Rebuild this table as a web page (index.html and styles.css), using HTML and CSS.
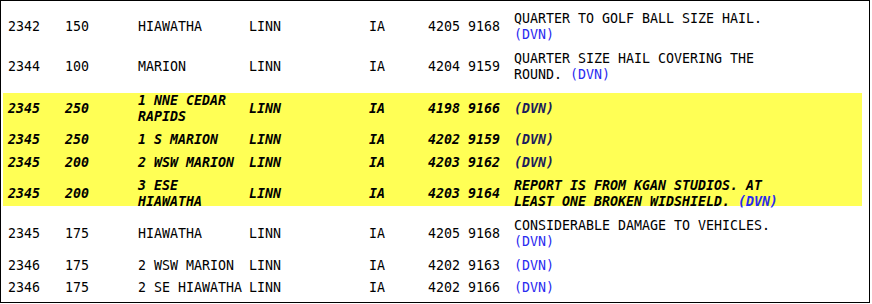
FILE: index.html
```html
<!DOCTYPE html>
<html>
<head>
<meta charset="utf-8">
<link rel="stylesheet" href="styles.css">
</head>
<body>
<div class="box">
  <div class="row">
    <div>2342</div><div>150</div><div>HIAWATHA</div><div>LINN</div><div>IA</div><div>4205 9168</div>
    <div class="rem">QUARTER TO GOLF BALL SIZE HAIL. <a class="src">(DVN)</a></div>
  </div>
  <div class="row">
    <div>2344</div><div>100</div><div>MARION</div><div>LINN</div><div>IA</div><div>4204 9159</div>
    <div class="rem">QUARTER SIZE HAIL COVERING THE ROUND. <a class="src">(DVN)</a></div>
  </div>
  <div class="hl">
    <div class="row">
      <div>2345</div><div>250</div><div>1 NNE CEDAR RAPIDS</div><div>LINN</div><div>IA</div><div>4198 9166</div>
      <div class="rem"><a class="src dark">(DVN)</a></div>
    </div>
    <div class="row">
      <div>2345</div><div>250</div><div>1 S MARION</div><div>LINN</div><div>IA</div><div>4202 9159</div>
      <div class="rem"><a class="src dark">(DVN)</a></div>
    </div>
    <div class="row">
      <div>2345</div><div>200</div><div>2 WSW MARION</div><div>LINN</div><div>IA</div><div>4203 9162</div>
      <div class="rem"><a class="src dark">(DVN)</a></div>
    </div>
    <div class="row">
      <div>2345</div><div>200</div><div>3 ESE HIAWATHA</div><div>LINN</div><div>IA</div><div>4203 9164</div>
      <div class="rem">REPORT IS FROM KGAN STUDIOS. AT LEAST ONE BROKEN WIDSHIELD. <a class="src">(DVN)</a></div>
    </div>
  </div>
  <div class="row r7">
    <div>2345</div><div>175</div><div>HIAWATHA</div><div>LINN</div><div>IA</div><div>4205 9168</div>
    <div class="rem">CONSIDERABLE DAMAGE TO VEHICLES. <a class="src">(DVN)</a></div>
  </div>
  <div class="row r8">
    <div>2346</div><div>175</div><div>2 WSW MARION</div><div>LINN</div><div>IA</div><div>4202 9163</div>
    <div class="rem"><a class="src">(DVN)</a></div>
  </div>
  <div class="row r9">
    <div>2346</div><div>175</div><div>2 SE HIAWATHA</div><div>LINN</div><div>IA</div><div>4202 9166</div>
    <div class="rem"><a class="src">(DVN)</a></div>
  </div>
</div>
</body>
</html>
```

FILE: styles.css
```css
html, body {
  margin: 0;
  padding: 0;
  background: #ffffff;
}

.box {
  box-sizing: border-box;
  width: 870px;
  height: 303px;
  border: 1px solid #000000;
  padding: 6px 7px 0 2px;
  font-family: "DejaVu Sans Mono", "Liberation Mono", monospace;
  font-size: 13.29px;
  line-height: 16px;
  color: #000000;
  overflow: hidden;
}

.row {
  display: grid;
  grid-template-columns: 57px 73px 111px 120px 59px 86px 353px;
  align-items: center;
  padding: 4px 0;
}

.row > div {
  padding: 0 1px 0 5px;
}

.row > div.rem {
  padding-right: 68px;
}

.src {
  color: #2a2af0;
}

.hl {
  background: #ffff55;
  height: 113px;
  margin: 6px 0 8px;
  font-weight: bold;
  font-style: italic;
}

.hl .row {
  padding: 0 0 7px;
}

.hl .src.dark {
  color: #1c1c5c;
}

.r8 {
  padding: 4px 0 3px;
}

.r9 {
  padding: 3px 0;
}
```
